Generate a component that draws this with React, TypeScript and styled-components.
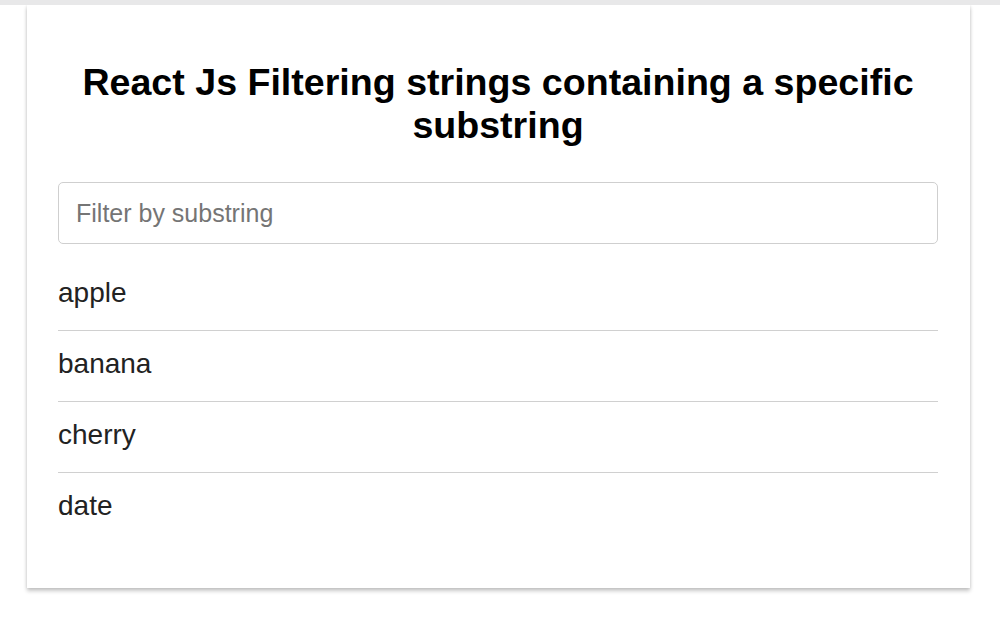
import * as React from 'react';
import styled, { createGlobalStyle } from 'styled-components';

const GlobalStyle = createGlobalStyle`
  html, body {
    margin: 0;
    padding: 0;
    background: #fff;
    font-family: 'Liberation Sans', Arial, sans-serif;
  }
`;

const Page = styled.div`
  min-height: 628px;
  padding-bottom: 40px;
  box-sizing: border-box;
  background: #fff;
`;

const TopStrip = styled.div`
  position: relative;
  z-index: 1;
  height: 5px;
  background: #e8e8e9;
`;

const Card = styled.div`
  margin: 0 30px 0 27px;
  padding: 56px 32px 45px 31px;
  background: #fff;
  box-shadow: 0 3px 4px rgba(0, 0, 0, 0.22), 0 0 3px rgba(0, 0, 0, 0.1);
`;

const Title = styled.h1`
  margin: 0 0 35px;
  font-size: 37.6px;
  font-weight: bold;
  line-height: 43px;
  text-align: center;
  color: #000;
`;

const FilterInput = styled.input`
  display: block;
  box-sizing: border-box;
  width: 100%;
  height: 62px;
  margin: 0 0 16px;
  padding: 0 17px;
  border: 1px solid #cfcfcf;
  border-radius: 5px;
  font-family: inherit;
  font-size: 25px;
  color: #222;
  outline: none;

  &::placeholder {
    color: #757575;
  }
`;

const List = styled.ul`
  margin: 0;
  padding: 0;
  list-style: none;
`;

const Item = styled.li<{ $last?: boolean }>`
  padding: 17px 0 21px;
  font-size: 28px;
  line-height: 32px;
  color: #222;
  border-bottom: ${({ $last }) => ($last ? 'none' : '1px solid #d0d0d0')};
`;

const fruits = ['apple', 'banana', 'cherry', 'date'];

export default function App() {
  const [query, setQuery] = React.useState<string>('');

  const handleQuery = (event: React.ChangeEvent<HTMLInputElement>) => {
    setQuery(event.target.value);
  };

  const filtered = fruits.filter((f) =>
    f.toLowerCase().includes(query.toLowerCase())
  );

  return (
    <Page>
      <GlobalStyle />
      <TopStrip />
      <Card>
        <Title>React Js Filtering strings containing a specific substring</Title>
        <FilterInput
          type='text'
          value={query}
          onChange={handleQuery}
          placeholder='Filter by substring'
        />
        <List>
          {filtered.map((f, i) => (
            <Item key={f} $last={i === filtered.length - 1}>
              {f}
            </Item>
          ))}
        </List>
      </Card>
    </Page>
  );
}
